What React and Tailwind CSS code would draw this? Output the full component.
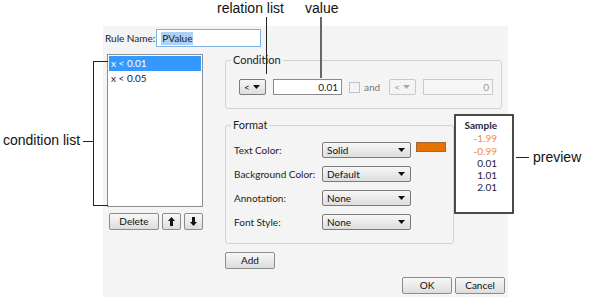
import React from "react";

const ui = { fontFamily: "Lato, 'Noto Sans', sans-serif" };
const note = { fontFamily: "'Liberation Sans', Arial, sans-serif" };

function Arrow({ disabled }) {
  return (
    <svg width="7" height="4" viewBox="0 0 7 4" className="shrink-0">
      <polygon points="0,0 7,0 3.5,4" fill={disabled ? "#a8a8a8" : "#111"} />
    </svg>
  );
}

function Dropdown({ label, width, disabled }) {
  return (
    <div
      className={`flex items-center justify-between h-[16px] rounded-[2px] border pl-[4px] pr-[5px] ${
        disabled
          ? "border-[#c9c9c9] bg-[#f4f4f4] text-[#9a9a9a]"
          : "border-[#7a7a7a] bg-gradient-to-b from-[#f6f6f6] to-[#dedede] text-[#111]"
      }`}
      style={{ width }}
    >
      <span className="leading-none">{label}</span>
      <Arrow disabled={disabled} />
    </div>
  );
}

function Button({ children, className = "" }) {
  return (
    <div
      className={`flex items-center justify-center h-[17px] rounded-[2px] border border-[#8c8c8c] bg-gradient-to-b from-[#f8f8f8] to-[#dddddd] text-[#111] ${className}`}
    >
      {children}
    </div>
  );
}

function ArrowButton({ down }) {
  return (
    <Button className="w-[19px]">
      <svg width="7" height="9" viewBox="0 0 7 9" className={down ? "rotate-180" : ""}>
        <polygon points="3.5,0 7,4 5,4 5,9 2,9 2,4 0,4" fill="#111" />
      </svg>
    </Button>
  );
}

function Group({ title, className = "", children }) {
  return (
    <div className={`relative rounded-[3px] border border-[#d3d3d3] ${className}`}>
      <span className="absolute left-[5px] top-[-8px] px-[2px] bg-[#f4f4f4] text-[#222] leading-[14px] text-[11px]">
        {title}
      </span>
      {children}
    </div>
  );
}

export default function App() {
  const formatRows = [
    { label: "Text Color:", value: "Solid", swatch: true },
    { label: "Background Color:", value: "Default" },
    { label: "Annotation:", value: "None" },
    { label: "Font Style:", value: "None" },
  ];

  return (
    <div className="relative w-[597px] h-[299px] bg-white overflow-hidden pt-[26px] pl-[103px]">
      {/* dialog */}
      <div className="flex flex-col w-[405px] h-[271px] bg-[#f4f4f4] text-[10px] text-[#222]" style={ui}>
        <div className="flex items-center mt-[3px] h-[18px] pl-[2px]">
          <span>Rule Name:</span>
          <div className="ml-[1px] w-[105px] h-[18px] border border-[#7fb2e5] bg-white flex items-center pl-[4px]">
            <span className="bg-[#add1f3] text-[#123] leading-[13px] px-[1px]">PValue</span>
          </div>
        </div>

        <div className="flex">
          {/* condition list */}
          <div className="ml-[4px] mt-[7px] w-[98px]">
            <div className="h-[153px] border border-[#8b8f96] bg-white p-[1px]">
              <div className="h-[15px] flex items-center pl-[2px] bg-[#3399ff] text-white">x &lt; 0.01</div>
              <div className="h-[15px] flex items-center pl-[2px] text-[#222]">x &lt; 0.05</div>
            </div>
            <div className="flex gap-[3px] mt-[6px] ml-[2px]">
              <Button className="w-[50px]">Delete</Button>
              <ArrowButton />
              <ArrowButton down />
            </div>
          </div>

          {/* right side */}
          <div className="ml-[22px] mt-[13px]">
            <Group title="Condition" className="w-[277px] h-[49px]">
              <div className="flex items-center pl-[13px] pt-[18px]">
                <Dropdown label="<" width={27} />
                <div className="ml-[7px] w-[69px] h-[16px] border border-[#8a8a8a] bg-white text-right pr-[3px] leading-[14px] text-[#1a1a3a]">
                  0.01
                </div>
                <div className="ml-[7px] w-[11px] h-[11px] border border-[#c2c2c2] bg-[#f3f3f3]" />
                <span className="ml-[4px] text-[#777]">and</span>
                <div className="ml-[9px]">
                  <Dropdown label="<" width={27} disabled />
                </div>
                <div className="ml-[7px] w-[70px] h-[16px] border border-[#cbcbcb] bg-[#f6f6f6] text-right pr-[3px] leading-[14px] text-[#9a9a9a]">
                  0
                </div>
              </div>
            </Group>

            <div className="flex items-start">
              <Group title="Format" className="mt-[16px] w-[229px] h-[119px]">
                <div className="flex flex-col gap-[8px] pt-[16px] pl-[8px]">
                  {formatRows.map((r) => (
                    <div key={r.label} className="flex items-center h-[16px]">
                      <span className="w-[88px]">{r.label}</span>
                      <Dropdown label={r.value} width={89} />
                      {r.swatch && (
                        <div className="ml-[5px] -mt-[6px] w-[30px] h-[10px] bg-[#e67300] border border-[#9a6a3a]" />
                      )}
                    </div>
                  ))}
                </div>
              </Group>
              <div className="mt-[5px] w-[60px] h-[100px] border-2 border-[#4a4a4a] bg-white pt-[3px] pl-[6px]">
                <div className="w-[35px] flex flex-col items-end leading-[12.3px]">
                  <span className="font-bold text-[#1e1e3a] mb-[1px]">Sample</span>
                  <span className="text-[#f08a3a]">-1.99</span>
                  <span className="text-[#f08a3a]">-0.99</span>
                  <span className="text-[#1e1e3a]">0.01</span>
                  <span className="text-[#1e1e3a]">1.01</span>
                  <span className="text-[#1e1e3a]">2.01</span>
                </div>
              </div>
            </div>

            <Button className="w-[50px] mt-[8px]">Add</Button>
          </div>
        </div>

        <div className="mt-auto mb-[3px] mr-[3px] flex justify-end gap-[3px]">
          <Button className="w-[50px]">OK</Button>
          <Button className="w-[50px]">Cancel</Button>
        </div>
      </div>

      {/* callouts */}
      <div className="absolute left-[217px] top-[0px] text-[14px] leading-[16px] text-[#111]" style={note}>
        relation list
      </div>
      <div className="absolute left-[266px] top-[17px] w-[1px] h-[57px] bg-[#222]" />

      <div className="absolute left-[305px] top-[0px] text-[14px] leading-[16px] text-[#111]" style={note}>
        value
      </div>
      <div className="absolute left-[320px] top-[17px] w-[2px] h-[61px] bg-[#666]" />

      <div className="absolute left-[3px] top-[132px] text-[14px] leading-[16px] text-[#111]" style={note}>
        condition list
      </div>
      <div className="absolute left-[83px] top-[141px] w-[10px] h-[1px] bg-[#222]" />
      <div className="absolute left-[93px] top-[61px] w-[15px] h-[145px] border-l border-t border-b border-[#222]" />

      <div className="absolute left-[516px] top-[157px] w-[13px] h-[1px] bg-[#222]" />
      <div className="absolute left-[533px] top-[149px] text-[14px] leading-[16px] text-[#111]" style={note}>
        preview
      </div>
    </div>
  );
}
